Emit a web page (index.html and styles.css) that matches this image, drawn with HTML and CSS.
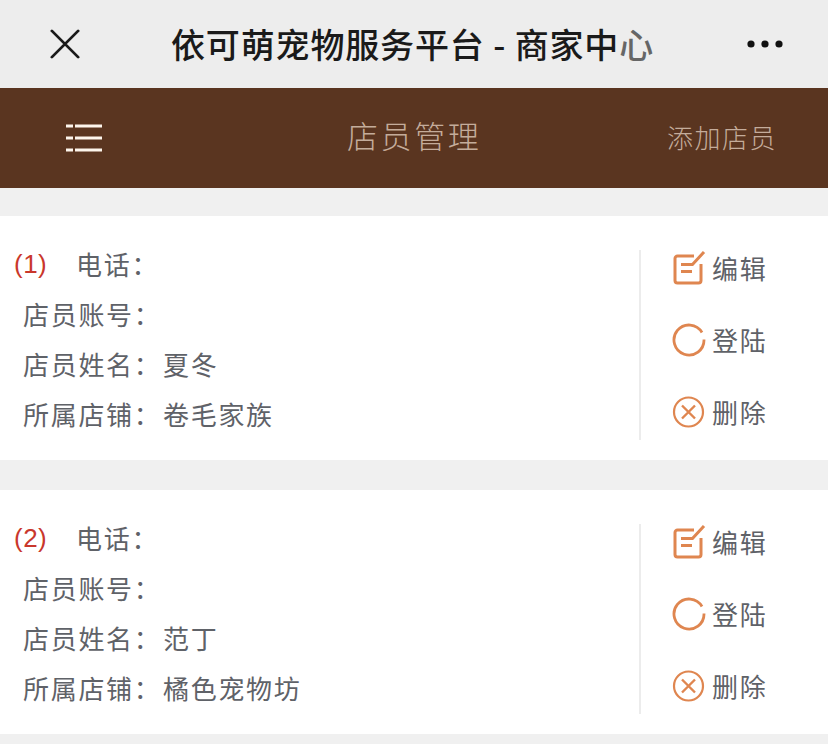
FILE: index.html
```html
<!DOCTYPE html>
<html lang="zh-CN">
<head>
<meta charset="utf-8">
<title>店员管理</title>
<link rel="stylesheet" href="styles.css">
</head>
<body>
<header class="wx-bar">
  <svg class="wx-close" viewBox="0 0 32 32" width="32" height="32"><path d="M2 2 L30 30 M30 2 L2 30" fill="none" stroke="#1a1a1a" stroke-width="3" stroke-linecap="round"/></svg>
  <h1 class="wx-title">依可萌宠物服务平台 - 商家中<span class="wx-fade">心</span></h1>
  <svg class="wx-more" viewBox="0 0 36 8" width="36" height="8"><circle cx="4" cy="4" r="3.6"/><circle cx="18" cy="4" r="3.6"/><circle cx="32" cy="4" r="3.6"/></svg>
</header>
<nav class="nav">
  <svg class="nav-menu" viewBox="0 0 36 28" width="36" height="28"><path d="M0 2h7M9 2h27M0 14h7M9 14h27M0 26h7M9 26h27" fill="none" stroke="#fdf5ec" stroke-width="3"/></svg>
  <div class="nav-title">店员管理</div>
  <div class="nav-add">添加店员</div>
</nav>
<main class="list">
  <section class="card">
    <div class="info">
      <div class="row row-first"><span class="idx">(1)</span><span>电话：</span></div>
      <div class="row"><span class="label">店员账号：</span></div>
      <div class="row"><span class="label">店员姓名：</span><span>夏冬</span></div>
      <div class="row"><span class="label">所属店铺：</span><span>卷毛家族</span></div>
    </div>
    <div class="actions">
      <div class="act"><svg class="ico" viewBox="0 0 34 34" width="34" height="34"><path d="M22 5H5.500A2.500 2.500 0 0 0 3 7.500V29.500A2.500 2.500 0 0 0 5.500 32H26.500A2.500 2.500 0 0 0 29 29.500V13M9 13.500H21M9 20.500H20M20 14L32 1" fill="none" stroke="#df8650" stroke-width="3"/></svg><span>编辑</span></div>
      <div class="act"><svg class="ico" viewBox="0 0 34 34" width="34" height="34"><path d="M30 9.500A15 15 0 1 0 32 16.500" fill="none" stroke="#df8650" stroke-width="2.800"/></svg><span>登陆</span></div>
      <div class="act"><svg class="ico" viewBox="0 0 34 34" width="34" height="34"><circle cx="16.500" cy="17" r="14.500" fill="none" stroke="#df8650" stroke-width="2.200"/><path d="M10 10.500L23 23.500M23 10.500L10 23.500" fill="none" stroke="#df8650" stroke-width="2.400"/></svg><span>删除</span></div>
    </div>
  </section>
  <section class="card">
    <div class="info">
      <div class="row row-first"><span class="idx">(2)</span><span>电话：</span></div>
      <div class="row"><span class="label">店员账号：</span></div>
      <div class="row"><span class="label">店员姓名：</span><span>范丁</span></div>
      <div class="row"><span class="label">所属店铺：</span><span>橘色宠物坊</span></div>
    </div>
    <div class="actions">
      <div class="act"><svg class="ico" viewBox="0 0 34 34" width="34" height="34"><path d="M22 5H5.500A2.500 2.500 0 0 0 3 7.500V29.500A2.500 2.500 0 0 0 5.500 32H26.500A2.500 2.500 0 0 0 29 29.500V13M9 13.500H21M9 20.500H20M20 14L32 1" fill="none" stroke="#df8650" stroke-width="3"/></svg><span>编辑</span></div>
      <div class="act"><svg class="ico" viewBox="0 0 34 34" width="34" height="34"><path d="M30 9.500A15 15 0 1 0 32 16.500" fill="none" stroke="#df8650" stroke-width="2.800"/></svg><span>登陆</span></div>
      <div class="act"><svg class="ico" viewBox="0 0 34 34" width="34" height="34"><circle cx="16.500" cy="17" r="14.500" fill="none" stroke="#df8650" stroke-width="2.200"/><path d="M10 10.500L23 23.500M23 10.500L10 23.500" fill="none" stroke="#df8650" stroke-width="2.400"/></svg><span>删除</span></div>
    </div>
  </section>
</main>
</body>
</html>
```
FILE: styles.css
```css
* { box-sizing: border-box; }
html, body { margin: 0; padding: 0; }
body {
  width: 828px;
  height: 744px;
  overflow: hidden;
  background: #f0f0f0;
  font-family: "Noto Sans CJK SC", "Liberation Sans", sans-serif;
}
.wx-bar {
  height: 88px;
  background: #ededed;
  display: flex;
  align-items: center;
  padding-left: 50px;
  color: #1a1a1a;
}
.wx-close { width: 30px; height: 30px; flex: none; }
.wx-title {
  margin: 0 0 0 91px;
  width: 480px;
  font-size: 34px;
  line-height: 86px;
  font-weight: 500;
  letter-spacing: 0.85px;
  white-space: nowrap;
  flex: none;
}
.wx-fade { color: #666; }
.wx-more { margin-left: 96px; fill: #111; flex: none; }
.nav {
  height: 100px;
  background: #5a3520;
  display: flex;
  align-items: center;
  padding-left: 66px;
  color: #c4ac9b;
}
.nav-menu { flex: none; }
.nav-title {
  margin: 0 0 6px 245px;
  width: 320px;
  font-size: 31px;
  font-weight: 300;
  letter-spacing: 2.600px;
  line-height: 94px;
  flex: none;
}
.nav-add {
  margin-bottom: 2px;
  font-size: 26px;
  font-weight: 300;
  letter-spacing: 1.500px;
  line-height: 96px;
  white-space: nowrap;
}
.list { padding-top: 28px; display: flex; flex-direction: column; gap: 30px; }
.card {
  height: 244px;
  background: #fff;
  display: flex;
  padding-top: 24px;
  color: #5f6268;
  font-size: 26px;
  letter-spacing: 1.700px;
}
.info { width: 639px; padding-left: 23px; }
.row { display: flex; height: 50px; line-height: 48px; white-space: nowrap; }
.label { width: 140px; flex: none; }
.row-first { margin-left: -9px; }
.idx { width: 62px; flex: none; color: #c9372c; font-family: "Liberation Sans", sans-serif; letter-spacing: 0.500px; }
.actions {
  width: 189px;
  height: 190px;
  margin-top: 10px;
  border-left: 2px solid #ececec;
  padding: 0 0 11px 31px;
  display: flex;
  flex-direction: column;
  justify-content: center;
  gap: 26px;
}
.act { display: flex; flex: none; align-items: center; height: 46px; gap: 6px; }
.ico { flex: none; width: 34px; }
```
